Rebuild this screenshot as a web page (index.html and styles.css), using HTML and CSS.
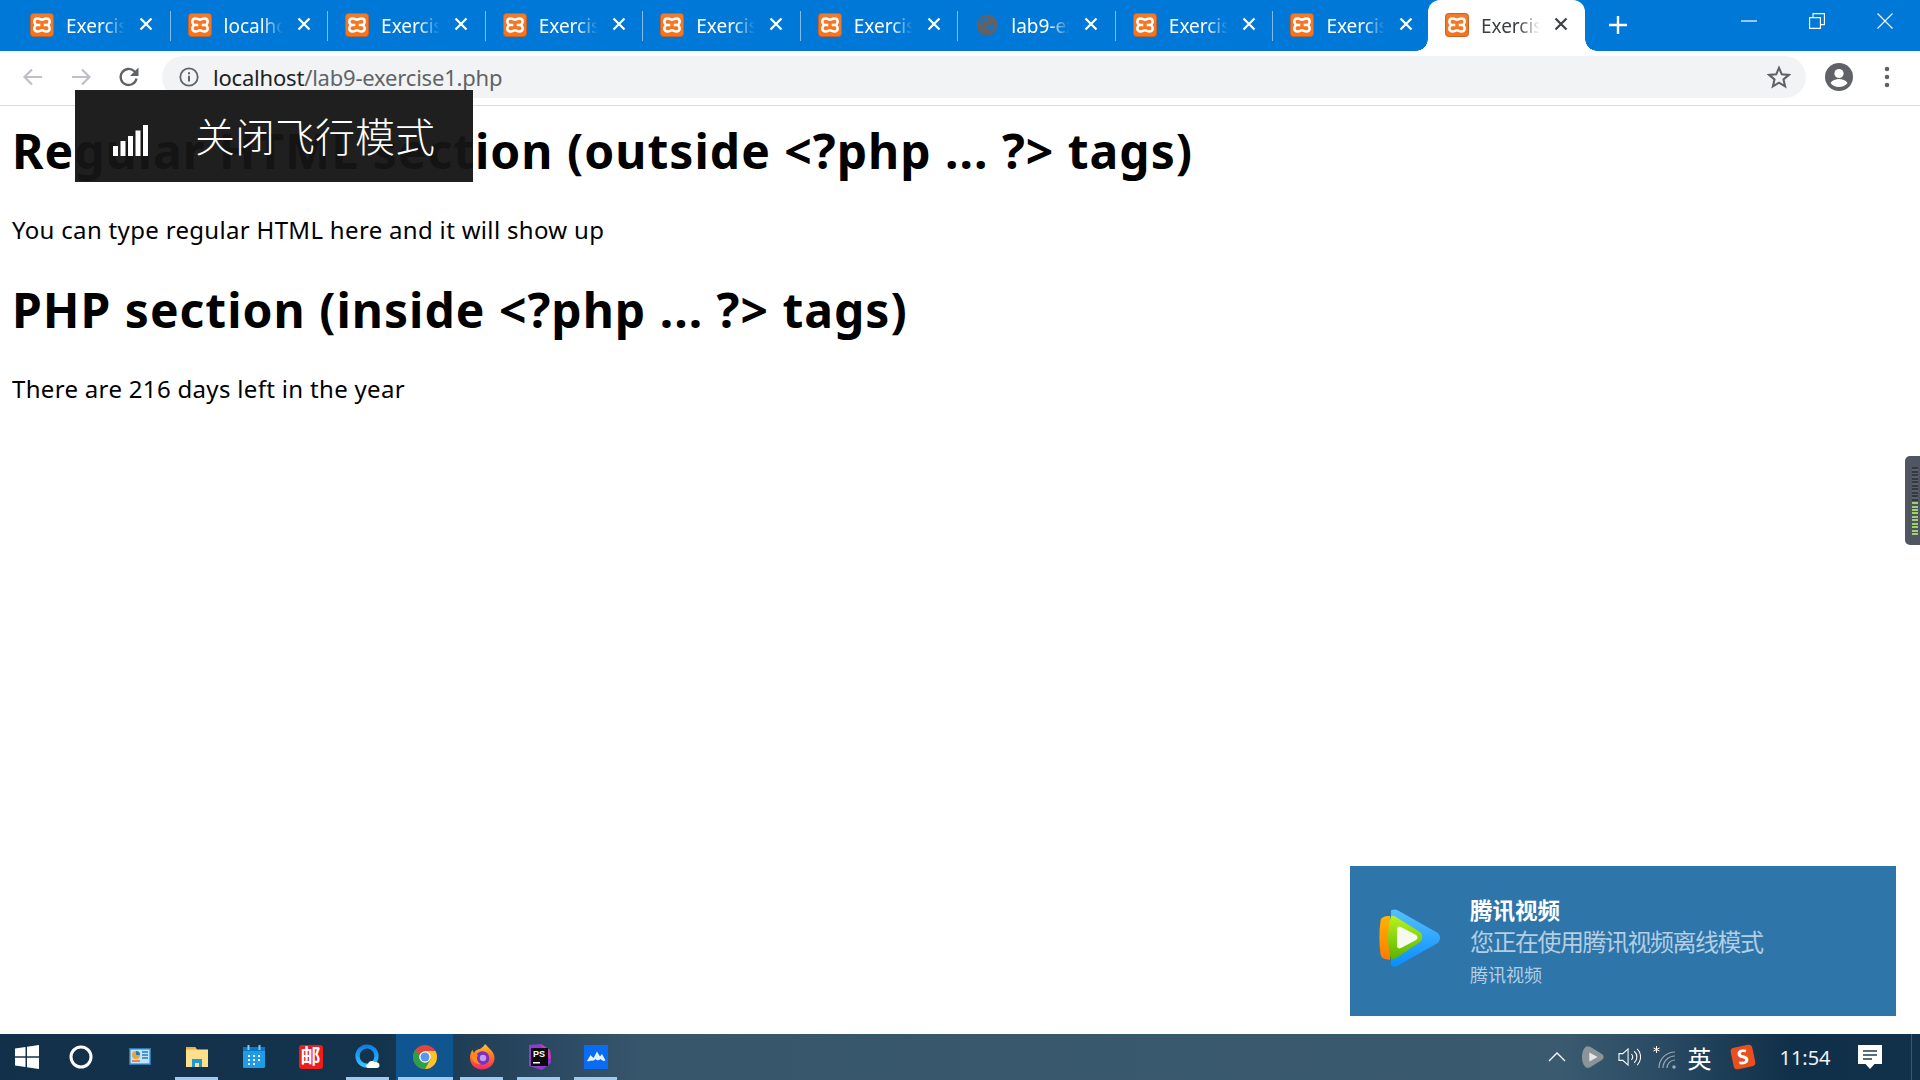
FILE: index.html
```html
<!DOCTYPE html>
<html lang="zh-CN">
<head>
<meta charset="utf-8">
<title>lab9-exercise1</title>
<link rel="stylesheet" href="styles.css">
</head>
<body>
<svg class="defs" aria-hidden="true">
  <defs>
    <linearGradient id="xg" x1="0" y1="0" x2="0" y2="1"><stop offset="0" stop-color="#f47a2c"/><stop offset="1" stop-color="#f5741c"/></linearGradient>
    <symbol id="xampp" viewBox="0 0 24 24">
      <rect x=".5" y=".5" width="23" height="23" rx="3" fill="url(#xg)" stroke="#c9612a"/>
      <path d="M7.800 5.500c1.800 0 2.700 1.200 4.200 1.200s2.400-1.200 4.200-1.200c2.200 0 3.500 1.400 3.500 3.200 0 1.600-1.400 2.200-1.400 3.300s1.400 1.700 1.400 3.300c0 1.800-1.300 3.200-3.500 3.200-1.800 0-2.700-1.200-4.200-1.200s-2.400 1.200-4.200 1.200c-2.200 0-3.500-1.400-3.500-3.200 0-1.600 1.400-2.200 1.400-3.300S4.300 10.300 4.300 8.700c0-1.800 1.300-3.200 3.500-3.200z" fill="none" stroke="#fff" stroke-width="2.500"/>
      <path d="M6 12h4.300M13.700 12H18" stroke="#fff" stroke-width="2.600"/>
    </symbol>
    <symbol id="close" viewBox="0 0 14 14"><path d="M1.500 1.500l11 11M12.500 1.500l-11 11" stroke="currentColor" stroke-width="2.200" fill="none"/></symbol>
    <linearGradient id="tvblue" x1="0" y1="0" x2="0" y2="1"><stop offset="0" stop-color="#55c0ff"/><stop offset="1" stop-color="#0a8dff"/></linearGradient>
    <linearGradient id="tvgreen" x1="0" y1="0" x2="0" y2="1"><stop offset="0" stop-color="#b7f51e"/><stop offset="1" stop-color="#5bb300"/></linearGradient>
    <linearGradient id="tvorange" x1="0" y1="0" x2="0" y2="1"><stop offset="0" stop-color="#ffb400"/><stop offset="1" stop-color="#ff7a00"/></linearGradient>
    <linearGradient id="qring" x1="0" y1="0" x2="0" y2="1"><stop offset="0" stop-color="#0f7fe8"/><stop offset="1" stop-color="#34c4ff"/></linearGradient>
    <linearGradient id="ffg" x1="0" y1="0" x2="0" y2="1"><stop offset="0" stop-color="#ffc42a"/><stop offset=".55" stop-color="#ff6a2a"/><stop offset="1" stop-color="#f0286a"/></linearGradient>
  </defs>
</svg>

<header class="tabbar">
  <div class="tabs">
    <div class="tab"><svg class="favicon"><use href="#xampp"/></svg><span class="tab-title">Exercise 1</span><svg class="tab-close"><use href="#close"/></svg></div>
    <div class="tab"><svg class="favicon"><use href="#xampp"/></svg><span class="tab-title">localhost</span><svg class="tab-close"><use href="#close"/></svg></div>
    <div class="tab"><svg class="favicon"><use href="#xampp"/></svg><span class="tab-title">Exercise 1</span><svg class="tab-close"><use href="#close"/></svg></div>
    <div class="tab"><svg class="favicon"><use href="#xampp"/></svg><span class="tab-title">Exercise 1</span><svg class="tab-close"><use href="#close"/></svg></div>
    <div class="tab"><svg class="favicon"><use href="#xampp"/></svg><span class="tab-title">Exercise 1</span><svg class="tab-close"><use href="#close"/></svg></div>
    <div class="tab"><svg class="favicon"><use href="#xampp"/></svg><span class="tab-title">Exercise 1</span><svg class="tab-close"><use href="#close"/></svg></div>
    <div class="tab">
      <svg class="favicon" viewBox="0 0 24 24"><circle cx="12" cy="12" r="10.500" fill="#5f6368"/><path d="M7 4.500c2 .5 4 .5 6 0 1 1.500-1 3-3 3.500-1.500.4-1.500 2-3 2.500-1.500.3-3-.5-3.500-1.500.7-2 2-3.500 3.500-4.500zM13 12c2-1 4.500-.8 7 .5-.4 2.500-1.500 4.500-3.500 6-2 .5-3-1-3.500-2.500-.5-1.500-1-3 0-4z" fill="#2b6ea8"/></svg>
      <span class="tab-title">lab9-exercise1.php</span><svg class="tab-close"><use href="#close"/></svg>
    </div>
    <div class="tab"><svg class="favicon"><use href="#xampp"/></svg><span class="tab-title">Exercise 1</span><svg class="tab-close"><use href="#close"/></svg></div>
    <div class="tab tab-last"><svg class="favicon"><use href="#xampp"/></svg><span class="tab-title">Exercise 1</span><svg class="tab-close"><use href="#close"/></svg></div>
    <div class="tab tab-active"><svg class="favicon"><use href="#xampp"/></svg><span class="tab-title">Exercise 1</span><svg class="tab-close"><use href="#close"/></svg></div>
  </div>
  <svg class="newtab" viewBox="0 0 18 18"><path d="M9 0v18M0 9h18" stroke="#fff" stroke-width="2.400"/></svg>
  <div class="winctl">
    <div class="winbtn"><svg class="winicon" viewBox="0 0 16 16"><path d="M0 8h16" stroke="#fff" stroke-width="1.200"/></svg></div>
    <div class="winbtn"><svg class="winicon" viewBox="0 0 16 16"><path d="M.6 4.600h10.800v10.800H.6zM4 4.600V.6h11.400v11H11.400" fill="none" stroke="#fff" stroke-width="1.100"/></svg></div>
    <div class="winbtn"><svg class="winicon" viewBox="0 0 16 16"><path d="M.5.500l15 15M15.500.500l-15 15" stroke="#fff" stroke-width="1.100"/></svg></div>
  </div>
</header>

<nav class="toolbar">
  <svg class="tool tool-first" viewBox="0 0 24 24"><path d="M21 12H4M11 4.500L3.500 12l7.500 7.500" fill="none" stroke="#bdc0c4" stroke-width="2.200"/></svg>
  <svg class="tool" viewBox="0 0 24 24"><path d="M3 12h17M13 4.500l7.500 7.500-7.500 7.500" fill="none" stroke="#bdc0c4" stroke-width="2.200"/></svg>
  <svg class="tool" viewBox="0 0 24 24"><path d="M19.500 13.500a8 8 0 1 1-2.200-7.200L20 9" fill="none" stroke="#5f6368" stroke-width="2.300"/><path d="M21.500 2.500v8.500H13z" fill="#5f6368"/></svg>
  <div class="omnibox">
    <svg class="info" viewBox="0 0 20 20"><circle cx="10" cy="10" r="8.700" fill="none" stroke="#5f6368" stroke-width="1.800"/><path d="M10 8.800v5.700M10 5.200v2" stroke="#5f6368" stroke-width="2"/></svg>
    <span class="url"><span class="host">localhost</span>/lab9-exercise1.php</span>
    <svg class="star" viewBox="0 0 24 24"><path d="M12 2.800l2.800 6.500 7 .6-5.300 4.600 1.600 6.900-6.100-3.700-6.100 3.700 1.600-6.900-5.300-4.600 7-.6z" fill="none" stroke="#5f6368" stroke-width="2.100"/></svg>
  </div>
  <svg class="account" viewBox="0 0 28 28"><circle cx="14" cy="14" r="14" fill="#5f6368"/><circle cx="14" cy="10.500" r="4.600" fill="#fff"/><path d="M5.500 20c1.800-3 5.500-4 8.500-4s6.700 1 8.500 4c-2 2.500-5 4-8.500 4s-6.500-1.500-8.500-4z" fill="#fff"/></svg>
  <svg class="menu" viewBox="0 0 6 24"><circle cx="3" cy="4" r="2.300" fill="#5f6368"/><circle cx="3" cy="12" r="2.300" fill="#5f6368"/><circle cx="3" cy="20" r="2.300" fill="#5f6368"/></svg>
</nav>

<main class="page">
  <h1>Regular HTML section (outside &lt;?php ... ?&gt; tags)</h1>
  <p>You can type regular HTML here and it will show up</p>
  <h1>PHP section (inside &lt;?php ... ?&gt; tags)</h1>
  <p>There are 216 days left in the year</p>
</main>

<footer class="taskbar">
  <div class="task task-start"><svg class="ticon" viewBox="0 0 26 26"><path d="M1 4.500l10.500-1.500v9.300H1zM13 2.800L25 1v11.300H13zM1 13.800h10.500v9.300L1 21.600zM13 13.800h12V25l-12-1.800z" fill="#fff"/></svg></div>
  <div class="task task-cortana"><svg class="ticon" viewBox="0 0 26 26"><circle cx="13" cy="13" r="10" fill="none" stroke="#fff" stroke-width="3"/></svg></div>
  <div class="task"><svg class="ticon" viewBox="0 0 26 26"><rect x="2" y="4" width="22" height="17" fill="#2a78b8"/><rect x="3.500" y="5.500" width="19" height="14" fill="#bfe3f7"/><circle cx="9" cy="11" r="4" fill="#e8a33a"/><path d="M9 11V7a4 4 0 0 1 4 4z" fill="#2a78b8"/><path d="M15 8h6M15 11h6M15 14h6" stroke="#2a78b8" stroke-width="1.400"/><path d="M5 17h8" stroke="#e8743a" stroke-width="1.600"/></svg></div>
  <div class="task task-open"><svg class="ticon" viewBox="0 0 26 26"><path d="M2 3h9l2 2.500h11V23H2z" fill="#ffe08a"/><path d="M2 3h9l2 2.500H2z" fill="#e8b53a"/><path d="M8 23v-8h10v8h-3v-4h-4v4z" fill="#1f9ad8"/><path d="M8 15h10v3H8z" fill="#1f9ad8"/></svg></div>
  <div class="task"><svg class="ticon" viewBox="0 0 26 26"><rect x="2" y="3" width="22" height="21" rx="1.500" fill="#1e9ce6"/><rect x="2" y="3" width="22" height="4" fill="#0f78c4"/><rect x="6.500" y="1" width="2" height="5" fill="#7dd0f5"/><rect x="17.500" y="1" width="2" height="5" fill="#7dd0f5"/><path d="M7 11h2v2H7zM12 11h2v2h-2zM17 11h2v2h-2zM7 15h2v2H7zM12 15h2v2h-2zM17 15h2v2h-2zM12 19h2v2h-2zM7 19h2v2H7z" fill="#fff"/></svg></div>
  <div class="task"><span class="mailicon">邮</span></div>
  <div class="task task-open"><svg class="ticon" viewBox="0 0 26 26"><circle cx="12" cy="12" r="9.500" fill="none" stroke="url(#qring)" stroke-width="4.200"/><path d="M13 24c-2 0-3-3 0-4 .5-2.500 4-4 6.500-2 2-.5 5 .5 5 3.200 0 1.800-1 2.800-2.500 2.800z" fill="#fff"/></svg></div>
  <div class="task task-active"><svg class="ticon" viewBox="0 0 26 26"><circle cx="13" cy="13" r="12" fill="#e0463a"/><path d="M13 13L2.600 7A12 12 0 0 0 13 25l6-10.400z" fill="#2f9e4a"/><path d="M13 13l6 1.500L13 25A12 12 0 0 0 25 13c0-2.200-.6-4.200-1.600-6H13z" fill="#f7c52b"/><circle cx="13" cy="13" r="5.800" fill="#fff"/><circle cx="13" cy="13" r="4.500" fill="#5a95ee"/></svg></div>
  <div class="task task-open"><svg class="ticon" viewBox="0 0 26 26"><path d="M16 0c2 2 3 3 5 5 3 3 4.500 6 4.500 9 0 6.500-5.500 11.500-12.500 11.500S1 20.500 1 13.500C1 10.500 2 8 3.500 6l1.500 3c1.500-3 4-4 6-4 1.500-1.500 4-2.500 5-5z" fill="url(#ffg)"/><circle cx="13.500" cy="14" r="6.800" fill="#7a2fc0"/><circle cx="14" cy="14" r="3.200" fill="#c39bf0"/><path d="M2 11c2.500-2 5-2 7 0-2 3-1 7 3 9-4 1-9-2-10-9z" fill="#ff8a1f"/></svg></div>
  <div class="task task-open"><svg class="ticon" viewBox="0 0 26 26"><path d="M3 1l12-1 9 6 1 13-9 7-13-4z" fill="#8f3bd0"/><path d="M15 0l9 6 1 9-6-3z" fill="#d13bb0"/><rect x="5" y="4" width="17" height="18" fill="#0b0b0d"/><text class="pstext" x="7" y="13">PS</text><rect x="7" y="18" width="7" height="1.500" fill="#fff"/></svg></div>
  <div class="task task-open"><svg class="ticon" viewBox="0 0 26 26"><rect x="1" y="1" width="24" height="24" fill="#0a6cf5"/><path d="M4 17l3.500-6 3 3 3.500-6.500 3 5 2-2.500 3.500 6.500c-2 1-3.500 0-5-1.500-1.500 1.500-3.500 2-5 0-1 1.500-3 2-4.500 1.500-1 .8-3 1-4 .5z" fill="#e6f2ff"/></svg></div>
  <div class="tray">
    <div class="tray-item tray-w36"><svg class="caret" viewBox="0 0 18 10"><path d="M1 9l8-8 8 8" fill="none" stroke="#fff" stroke-width="1.300"/></svg></div>
    <div class="tray-item tray-w36"><svg class="trayplay" viewBox="0 0 26 24"><path d="M5 1c1-1 3-1 5 0l13 8c2 1.500 2 4.500 0 6l-13 8c-2 1-4 1-5 0-3-3-4-7-4-11S2 4 5 1z" fill="#8a9499"/><path d="M9 7l9 5-9 5z" fill="#e8e8e8"/></svg></div>
    <div class="tray-item tray-w36"><svg class="speaker" viewBox="0 0 24 22"><path d="M1 7.500h4L10.500 2.500v17L5 14.500H1z" fill="none" stroke="#fff" stroke-width="1.100"/><path d="M14 8a4 4 0 0 1 0 6M17 5a8 8 0 0 1 0 12M20 2.500a12 12 0 0 1 0 17" fill="none" stroke="#fff" stroke-width="1.100"/></svg></div>
    <div class="tray-item tray-w36"><svg class="wifi" viewBox="0 0 24 24"><path d="M3.500 1v7M.5 3l6 3M6.500 3l-6 3" stroke="#fff" stroke-width="1"/><path d="M6 23a16 16 0 0 1 16-16M10 23a12 12 0 0 1 12-12M14 23a8 8 0 0 1 8-8" fill="none" stroke="#9aa8b3" stroke-width="1.200"/><circle cx="21" cy="22" r="1.800" fill="#9aa8b3"/></svg></div>
    <div class="tray-item tray-ime">英</div>
    <div class="tray-item tray-sogou"><span class="sogou">S</span></div>
    <div class="tray-item tray-clock">11:54</div>
    <div class="tray-item tray-action"><svg class="actionicon" viewBox="0 0 24 25"><path d="M0 0h24v19h-7.500L12 24l-4.500-5H0z" fill="#fff"/><path d="M5 6h14M5 10h14M5 14h9" stroke="#1f3d55" stroke-width="1.300"/></svg></div>
    <div class="tray-end"></div>
  </div>
</footer>

<aside class="flight">
  <svg class="signal" viewBox="0 0 36 31"><path d="M0 21h5v10H0zM7.500 16h5v15h-5zM15 11h5v20h-5zM22.500 5.500h5V31h-5zM30 0h5v31h-5z" fill="#fff"/></svg>
  <span class="flight-text">关闭飞行模式</span>
</aside>

<aside class="levelmeter"><div class="meter-off"></div><div class="meter-on"></div></aside>

<aside class="toast">
  <svg class="toast-icon" viewBox="0 0 62 58">
    <path d="M12 1.500c2-1.500 5-1.500 7 0l39 22c4 2.500 4 8.500 0 11l-39 22c-2 1.500-5 1.500-7 0z" fill="url(#tvblue)"/>
    <path d="M11 7C4 7 2 9 1.500 12 0 22 0 34 1.500 45 2 49 5 50 11 51z" fill="url(#tvorange)"/>
    <path d="M12 7c2-.5 3 0 5 1l24 15c3 2 3 8 0 10L17 49c-2 1-3 1.500-5 1-2-7-3-14-3-21s1-15 3-22z" fill="url(#tvgreen)"/>
    <path d="M18 20c0-2 2-3 4-2l15 8c2 1 2 4 0 5l-15 8c-2 1-4 0-4-2z" fill="#f6f9ee"/>
  </svg>
  <div class="toast-body">
    <div class="toast-title">腾讯视频</div>
    <div class="toast-msg">您正在使用腾讯视频离线模式</div>
    <div class="toast-src">腾讯视频</div>
  </div>
</aside>
</body>
</html>
```
FILE: styles.css
```css
* { box-sizing: border-box; }
html, body { margin: 0; padding: 0; height: 100%; }
body {
  width: 1920px;
  height: 1080px;
  overflow: hidden;
  position: relative;
  display: flex;
  flex-direction: column;
  background: #fff;
  font-family: "Noto Sans", "Noto Sans CJK SC", sans-serif;
  color: #000;
}
.defs { position: absolute; width: 0; height: 0; }

/* tab strip */
.tabbar { height: 51px; flex: none; background: #0078d7; display: flex; align-items: flex-start; }
.tabs { display: flex; padding-left: 13px; }
.tab {
  position: relative;
  width: 157.55px;
  height: 51px;
  padding: 0 14px 2px 17px;
  display: flex;
  align-items: center;
  color: #fff;
}
.tab::after {
  content: "";
  position: absolute;
  right: 0;
  top: 11px;
  width: 1px;
  height: 30px;
  background: rgba(255, 255, 255, .5);
}
.tab-last::after, .tab-active::after { display: none; }
.favicon { width: 24px; height: 24px; flex: none; }
.tab-title {
  width: 60px;
  margin-left: 12px;
  flex: none;
  overflow: hidden;
  white-space: nowrap;
  font-size: 19px;
  padding-top: 2px;
  -webkit-mask-image: linear-gradient(to right, #000 62%, transparent 98%);
  mask-image: linear-gradient(to right, #000 62%, transparent 98%);
}
.tab-close { width: 14px; height: 14px; flex: none; margin-left: 13px; margin-top: -2px; }
.tab-active { background: #fff; color: #3c4043; border-radius: 12px 12px 0 0; margin-left: -3px; width: 157px; }
.tab-active::before {
  content: "";
  position: absolute;
  left: -12px;
  right: -12px;
  bottom: 0;
  height: 12px;
  background:
    radial-gradient(circle at 0 0, #0078d7 11.500px, #fff 12px) left bottom / 12px 12px no-repeat,
    radial-gradient(circle at 100% 0, #0078d7 11.500px, #fff 12px) right bottom / 12px 12px no-repeat;
  z-index: 0;
}
.tab-active > * { position: relative; z-index: 1; }
.newtab { width: 18px; height: 18px; margin: 16px 0 0 24px; flex: none; }
.winctl { margin-left: auto; display: flex; margin-right: 1px; }
.winbtn { width: 68px; height: 42px; display: flex; align-items: center; justify-content: center; }
.winicon { width: 16px; height: 16px; }

/* toolbar */
.toolbar {
  height: 55px;
  flex: none;
  background: #fff;
  border-bottom: 1px solid #dadce0;
  display: flex;
  align-items: center;
  padding-bottom: 2px;
}
.tool { width: 24px; height: 24px; margin-left: 24px; flex: none; }
.tool-first { margin-left: 21px; }
.omnibox {
  width: 1644px;
  height: 42px;
  margin-left: 21px;
  border-radius: 21px;
  background: #f1f3f4;
  display: flex;
  align-items: center;
  padding: 0 15px 0 17px;
  flex: none;
}
.info { width: 20px; height: 20px; flex: none; }
.url { margin-left: 14px; font-size: 22px; letter-spacing: -.2px; color: #5f6368; white-space: nowrap; }
.host { color: #202124; }
.star { width: 24px; height: 24px; margin-left: auto; flex: none; }
.account { width: 28px; height: 28px; margin-left: 19px; flex: none; }
.menu { width: 6px; height: 24px; margin-left: 31px; flex: none; }

/* page */
.page { flex: 1; padding: 13px 12px 0; }
h1 { margin: 0 0 31px; font-size: 48px; line-height: 64px; font-weight: 700; letter-spacing: 1px; }
p { margin: 0 0 32px; font-size: 24px; line-height: 32px; letter-spacing: .32px; }

/* taskbar */
.taskbar {
  height: 46px;
  flex: none;
  display: flex;
  color: #fff;
  background: linear-gradient(to right, #12304a 0, #14334d 380px, #37566c 640px, #3a5a70 1560px, #2a4b63 1660px, #10304a 1790px, #11304a 1920px);
}
.task { width: 57px; height: 46px; padding-bottom: 1px; display: flex; align-items: center; justify-content: center; position: relative; }
.task-start { width: 54px; }
.task-cortana { padding-right: 3px; }
.task-open::after {
  content: "";
  position: absolute;
  left: 7px;
  right: 7px;
  bottom: 0;
  height: 3px;
  background: #9fcbee;
}
.task-active { background: #0f558f; }
.task-active::after {
  content: "";
  position: absolute;
  left: 2px;
  right: 0;
  bottom: 0;
  height: 3px;
  background: #9fcbee;
}
.ticon { width: 26px; height: 26px; }
.mailicon {
  width: 24px;
  height: 24px;
  border-radius: 3px;
  background: #ee1c1c;
  color: #fff;
  font-size: 20px;
  font-weight: 700;
  line-height: 24px;
  text-align: center;
}
.pstext { font-family: "Liberation Sans", sans-serif; font-weight: 700; font-size: 9px; fill: #fff; }
.tray { margin-left: auto; display: flex; height: 46px; align-items: center; }
.tray-item { display: flex; align-items: center; justify-content: center; height: 46px; flex: none; }
.tray-w36 { width: 36px; }
.caret { width: 18px; height: 10px; }
.trayplay { width: 24px; height: 24px; }
.speaker { width: 23px; height: 22px; }
.wifi { width: 24px; height: 24px; }
.tray-ime { width: 33px; font-size: 24px; margin-right: 6px; }
.tray-sogou { width: 42px; margin-right: 6px; }
.sogou {
  width: 22px;
  height: 22px;
  border-radius: 4px;
  background: #e8501f;
  color: #fff;
  font-size: 20px;
  font-weight: 700;
  line-height: 22px;
  text-align: center;
  transform: rotate(-12deg);
}
.tray-clock { width: 70px; font-size: 20px; color: #eef2f5; margin-right: 6px; }
.tray-action { width: 48px; }
.actionicon { width: 24px; height: 25px; }
.tray-end { width: 18px; height: 46px; margin-right: 8px; border-right: 1px solid #3a5670; flex: none; }

/* overlays */
.flight {
  position: absolute;
  left: 75px;
  top: 90px;
  width: 398px;
  height: 92px;
  background: rgba(21, 21, 21, .957);
  display: flex;
  align-items: center;
  color: #fff;
}
.signal { width: 36px; height: 31px; margin: 9px 0 0 38px; flex: none; }
.flight-text { margin: 2px 0 0 46px; font-size: 40px; font-weight: 300; line-height: 48px; white-space: nowrap; }
.levelmeter {
  position: absolute;
  right: 0;
  top: 456px;
  width: 15px;
  height: 89px;
  background: #4f5561;
  border-radius: 5px 0 0 5px;
  padding: 11px 2px 10px 7px;
}
.meter-off { height: 35px; background: repeating-linear-gradient(to bottom, #343841 0 2px, #5b616b 2px 3.500px); }
.meter-on { height: 33px; background: repeating-linear-gradient(to bottom, #9ecf6a 0 2px, #4f5561 2px 3.500px); }
.toast {
  position: absolute;
  left: 1350px;
  top: 866px;
  width: 546px;
  height: 150px;
  background: #2e75aa;
  display: flex;
  align-items: center;
  padding-left: 29px;
}
.toast-icon { width: 62px; height: 58px; flex: none; margin-top: -6px; }
.toast-body { margin-left: 29px; display: flex; flex-direction: column; margin-top: 4px; white-space: nowrap; }
.toast-title { font-size: 22.500px; font-weight: 700; line-height: 30px; color: #fff; }
.toast-msg { font-size: 24px; letter-spacing: -1.500px; line-height: 32px; color: #b3cee2; }
.toast-src { font-size: 18px; line-height: 30px; margin-top: 2px; color: #b3cee2; }
```
